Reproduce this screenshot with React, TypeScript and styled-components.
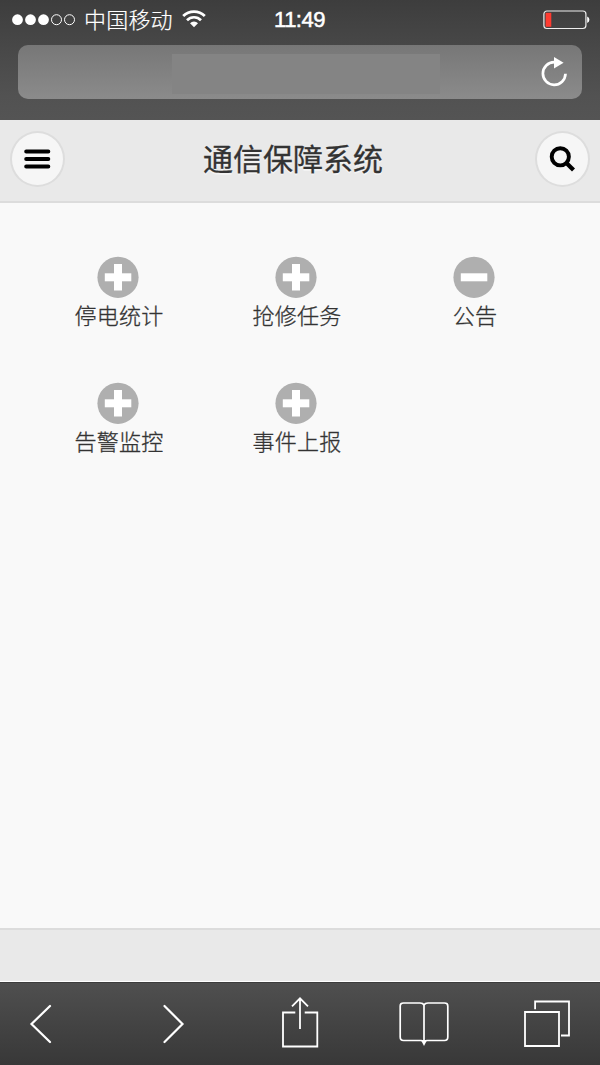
import React from 'react';
import styled, { createGlobalStyle } from 'styled-components';

const GlobalStyle = createGlobalStyle`
  * { box-sizing: border-box; }
  body {
    margin: 0;
    background: #f9f9f9;
    font-family: 'Liberation Sans', 'Noto Sans CJK SC', sans-serif;
  }
  svg { display: block; flex: none; }
`;

const Screen = styled.div`
  display: flex;
  flex-direction: column;
  width: 600px;
  height: 1065px;
  overflow: hidden;
`;

const BrowserTop = styled.div`
  flex: none;
  height: 120px;
  background: linear-gradient(#3d3d3d, #484848 40%, #525252 80%, #545454);
`;

const StatusBar = styled.div`
  display: grid;
  grid-template-columns: 1fr auto 1fr;
  align-items: center;
  height: 45px;
  padding: 0 10px 6px 12px;
  color: #fff;
`;

const StatusLeft = styled.div`
  display: flex;
  align-items: center;
`;

const Carrier = styled.span`
  margin: 0 9px 4px 8px;
  font: 300 22px/32px 'Noto Sans CJK SC', sans-serif;
  letter-spacing: 0.2px;
  -webkit-text-stroke: 0.2px #fff;
`;

const Clock = styled.time`
  margin-right: 3px;
  font-size: 22px;
  line-height: 26px;
  letter-spacing: -0.5px;
  -webkit-text-stroke: 0.5px #fff;
`;

const StatusRight = styled.div`
  display: flex;
  justify-content: flex-end;
`;

const AddressBar = styled.div`
  display: grid;
  grid-template-columns: 154px 268px 1fr;
  align-items: center;
  height: 54px;
  margin: 0 18px;
  border-radius: 10px;
  background: linear-gradient(#777, #828282 55%, #8b8b8b);
`;

const AddressField = styled.div`
  grid-column: 2;
  height: 40px;
  margin-top: 4px;
  background: #848484;
`;

const ReloadButton = styled.button`
  justify-self: end;
  margin: 0 14px 0 0;
  padding: 0;
  border: 0;
  background: none;
`;

const Header = styled.header`
  display: flex;
  flex: none;
  align-items: center;
  justify-content: space-between;
  height: 83px;
  padding: 0 10px 3px;
  background: #e9e9e9;
  border-bottom: 2px solid #dcdcdc;
`;

const Title = styled.h1`
  margin: 0 14px 4px 0;
  font: 400 30px/44px 'Noto Sans CJK SC', sans-serif;
  color: #333;
  -webkit-text-stroke: 0.3px #333;
  text-shadow: 0 2px 0 #f3f3f3;
`;

const RoundButton = styled.button`
  display: grid;
  place-items: center;
  width: 55px;
  height: 56px;
  padding: 0;
  border: 2px solid #ddd;
  border-radius: 50%;
  background: #f6f6f6;
`;

const Menu = styled.main`
  display: grid;
  flex: 1;
  grid-template-columns: repeat(3, 178px);
  grid-auto-rows: 126px;
  padding: 53px 0 0 29px;
`;

const MenuItem = styled.a`
  display: flex;
  flex-direction: column;
  align-items: center;
`;

const MenuLabel = styled.span`
  margin: -1px 0 0 2px;
  font: 300 22px/34px 'Noto Sans CJK SC', sans-serif;
  letter-spacing: 0.2px;
  color: #333;
  -webkit-text-stroke: 0.3px #333;
`;

const Footer = styled.footer`
  flex: none;
  height: 54px;
  background: #e9e9e9;
  border-top: 2px solid #dcdcdc;
  border-bottom: 1px solid #fff;
`;

const Toolbar = styled.nav`
  display: grid;
  flex: none;
  grid-template-columns: 134px 119px 118px 124px auto;
  align-items: center;
  justify-items: start;
  height: 83px;
  padding: 0 28px 1px;
  border-top: 1px solid #3c3c3c;
  background: linear-gradient(#4f4f4f, #383838);
`;

const ToolButton = styled.button`
  padding: 0;
  border: 0;
  background: none;
`;

const SignalIcon = () => (
  <svg width="64" height="12" viewBox="0 0 64 12">
    {[0, 1, 2, 3, 4].map((i) => (
      <circle
        key={i}
        cx={5.5 + i * 13}
        cy="5.7"
        r={i < 3 ? 5.4 : 5}
        fill={i < 3 ? '#fff' : 'none'}
        stroke={i < 3 ? 'none' : '#fff'}
        strokeWidth="1"
      />
    ))}
  </svg>
);

const WifiIcon = () => (
  <svg width="24" height="20" viewBox="0 0 24 20" fill="none" stroke="#fff">
    <path d="M1.2 6.1A15.2 15.2 0 0 1 22.8 6.1" strokeWidth="2.8" />
    <path d="M5 10.2A9.8 9.8 0 0 1 19 10.2" strokeWidth="2.7" />
    <path d="M8 13.2A5.6 5.6 0 0 1 16 13.2L12 17.2Z" fill="#fff" stroke="none" />
  </svg>
);

const BatteryIcon = () => (
  <svg width="47" height="20" viewBox="0 0 47 20">
    <rect x="0.9" y="1" width="42" height="17.5" rx="3" fill="none" stroke="#eee" strokeWidth="1.2" />
    <rect x="2.6" y="2.8" width="5.7" height="14" fill="#ff3b30" />
    <path d="M44.2 6.5A3.5 3.5 0 0 1 44.2 13Z" fill="#fff" />
  </svg>
);

const ReloadIcon = () => (
  <svg width="27" height="30" viewBox="0 0 27 30">
    <path d="M13.2 5.2A11.3 11.3 0 1 0 24.5 16.8" fill="none" stroke="#fff" strokeWidth="2.7" />
    <path d="M13 0L22.6 5.8L13 11.5Z" fill="#fff" />
  </svg>
);

const BarsIcon = () => (
  <svg width="28" height="20" viewBox="0 0 28 20" stroke="#000" strokeWidth="4" strokeLinecap="round">
    <path d="M2.2 2.5H24.3M2.2 10H24.3M2.2 17.5H24.3" />
  </svg>
);

const SearchIcon = () => (
  <svg width="28" height="28" viewBox="0 0 28 28" fill="none" stroke="#000">
    <circle cx="11.3" cy="11.8" r="8.6" strokeWidth="3.9" />
    <path d="M16.9 17.4L24.5 25.1" strokeWidth="4.2" />
  </svg>
);

const MarkIcon = ({ kind }: { kind: 'plus' | 'minus' }) => (
  <svg width="42" height="42" viewBox="0 0 42 42">
    <circle cx="21" cy="21.3" r="20.6" fill="#afafaf" />
    <rect x="7.8" y="17.3" width="26.5" height="8" fill="#fff" />
    {kind === 'plus' && <rect x="17" y="8" width="8" height="26.5" fill="#fff" />}
  </svg>
);

const BackIcon = () => (
  <svg width="24" height="40" viewBox="0 0 24 40" fill="none" stroke="#fff" strokeWidth="2.2" strokeLinecap="round">
    <path d="M22 2L3.5 20L22 38" />
  </svg>
);

const ForwardIcon = () => (
  <svg width="24" height="40" viewBox="0 0 24 40" fill="none" stroke="#fff" strokeWidth="2.2" strokeLinecap="round">
    <path d="M2.5 2L20.5 20L2.5 38" />
  </svg>
);

const ShareIcon = () => (
  <svg width="38" height="54" viewBox="0 0 38 54" fill="none" stroke="#fff" strokeWidth="1.8">
    <path d="M14.3 15.5H2V49.5H36.3V15.5H23.7M19 32V2M11 9.3L19 1.3L27 9.3" />
  </svg>
);

const BookIcon = () => (
  <svg width="50" height="44" viewBox="0 1 50 44" fill="none" stroke="#fff" strokeWidth="1.7">
    <path d="M25 4Q24 2 21 2H4.5Q1.2 2 1.2 5V36Q1.2 39.5 4.5 39.5H22Q25 39.5 25 43Q25 39.5 28 39.5H45.5Q48.8 39.5 48.8 36V5Q48.8 2 45.5 2H29Q26 2 25 4ZV43" />
    <path d="M22 39H28L25 45Z" fill="#fff" stroke="none" />
  </svg>
);

const TabsIcon = () => (
  <svg width="48" height="48" viewBox="0 0 48 48" fill="none" stroke="#fff" strokeWidth="1.8">
    <path d="M2 12H36V46H2ZM12.1 9.3V1.5H46V35.5H38" />
  </svg>
);

const items: { label: string; kind: 'plus' | 'minus' }[] = [
  { label: '停电统计', kind: 'plus' },
  { label: '抢修任务', kind: 'plus' },
  { label: '公告', kind: 'minus' },
  { label: '告警监控', kind: 'plus' },
  { label: '事件上报', kind: 'plus' },
];

const tools = [
  { name: 'Back', Icon: BackIcon },
  { name: 'Forward', Icon: ForwardIcon },
  { name: 'Share', Icon: ShareIcon },
  { name: 'Bookmarks', Icon: BookIcon },
  { name: 'Tabs', Icon: TabsIcon },
];

export default function App() {
  return (
    <Screen>
      <GlobalStyle />
      <BrowserTop>
        <StatusBar>
          <StatusLeft>
            <SignalIcon />
            <Carrier>中国移动</Carrier>
            <WifiIcon />
          </StatusLeft>
          <Clock>11:49</Clock>
          <StatusRight>
            <BatteryIcon />
          </StatusRight>
        </StatusBar>
        <AddressBar>
          <AddressField />
          <ReloadButton aria-label="Reload">
            <ReloadIcon />
          </ReloadButton>
        </AddressBar>
      </BrowserTop>
      <Header>
        <RoundButton aria-label="Menu">
          <BarsIcon />
        </RoundButton>
        <Title>通信保障系统</Title>
        <RoundButton aria-label="Search">
          <SearchIcon />
        </RoundButton>
      </Header>
      <Menu>
        {items.map(({ label, kind }) => (
          <MenuItem key={label}>
            <MarkIcon kind={kind} />
            <MenuLabel>{label}</MenuLabel>
          </MenuItem>
        ))}
      </Menu>
      <Footer />
      <Toolbar>
        {tools.map(({ name, Icon }) => (
          <ToolButton key={name} aria-label={name}>
            <Icon />
          </ToolButton>
        ))}
      </Toolbar>
    </Screen>
  );
}
